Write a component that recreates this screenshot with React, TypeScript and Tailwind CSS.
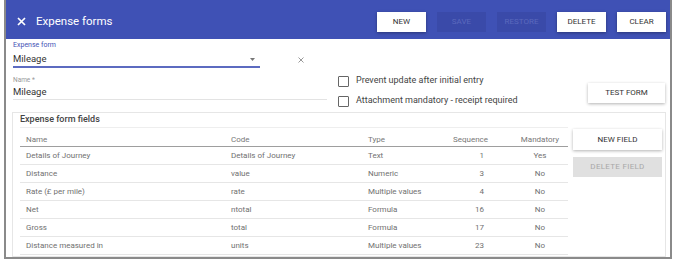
import React from "react";

const rows = [
    { name: "Details of Journey", code: "Details of Journey", type: "Text", seq: 1, mandatory: "Yes" },
    { name: "Distance", code: "value", type: "Numeric", seq: 3, mandatory: "No" },
    { name: "Rate (£ per mile)", code: "rate", type: "Multiple values", seq: 4, mandatory: "No" },
    { name: "Net", code: "ntotal", type: "Formula", seq: 16, mandatory: "No" },
    { name: "Gross", code: "total", type: "Formula", seq: 17, mandatory: "No" },
    { name: "Distance measured in", code: "units", type: "Multiple values", seq: 23, mandatory: "No" },
];

function HeaderButton({ label, disabled }: { label: string; disabled?: boolean }) {
    return (
        <button
            className={
                disabled
                    ? "w-[49px] h-[20px] bg-[#3a4aa9] text-[#5a69bd] text-[8px] uppercase"
                    : "w-[49px] h-[20px] bg-white text-[#333] text-[8px] uppercase shadow-[0_1px_3px_rgba(0,0,0,0.35)]"
            }
        >
            {label}
        </button>
    );
}

function Checkbox({ label }: { label: string }) {
    return (
        <div className="h-[20px] flex items-center">
            <div className="w-[11px] h-[11px] border-[1.5px] border-[#666] rounded-[1px]" />
            <span className="ml-[7px] text-[9px] text-[#444]">{label}</span>
        </div>
    );
}

export default function App() {
    return (
        <div className="w-[674px] h-[260px] bg-white overflow-hidden font-['Roboto',sans-serif]">
            <div className="ml-[4px] w-[668px] h-[259px] border-x-2 border-b-2 border-[#8a8a8a] flex flex-col overflow-hidden">
                {/* header */}
                <div className="h-[39px] flex-none bg-[#3f51b5] flex items-start pl-[11px] pr-[4px]">
                    <svg width="9" height="9" viewBox="0 0 9 9" className="flex-none mt-[17px]">
                        <path d="M1 1L8 8M8 1L1 8" stroke="white" strokeWidth="1.7" />
                    </svg>
                    <span className="ml-[10px] mt-[14px] text-white text-[11.5px] leading-[14px]">Expense forms</span>
                    <div className="ml-auto flex gap-[11px] mt-[12px]">
                        <HeaderButton label="New" />
                        <HeaderButton label="Save" disabled />
                        <HeaderButton label="Restore" disabled />
                        <HeaderButton label="Delete" />
                        <HeaderButton label="Clear" />
                    </div>
                </div>

                {/* form area */}
                <div className="h-[73px] flex flex-none items-start">
                    <div className="ml-[7px] w-[314px]">
                        <div className="flex items-end">
                            <div className="w-[247px] pt-[1px]">
                                <div className="h-[10px] leading-[10px] text-[7px] text-[#3f51b5]">Expense form</div>
                                <div className="h-[18px] pt-[2px] flex items-center justify-between border-b-2 border-[#5c6bc0]">
                                    <span className="text-[9.5px] text-[#333]">Mileage</span>
                                    <svg width="5" height="3" viewBox="0 0 5 3" className="mr-[5px]">
                                        <path d="M0 0H5L2.5 3Z" fill="#777" />
                                    </svg>
                                </div>
                            </div>
                            <svg width="6" height="6" viewBox="0 0 6 6" className="ml-[38px] mb-[5px]">
                                <path d="M0.5 0.5L5.5 5.5M5.5 0.5L0.5 5.5" stroke="#999" strokeWidth="1" />
                            </svg>
                        </div>
                        <div className="mt-[7px]">
                            <div className="h-[10px] leading-[10px] text-[6.5px] text-[#999]">Name *</div>
                            <div className="h-[15px] flex items-center border-b border-[#e3e3e3]">
                                <span className="text-[9.5px] text-[#333]">Mileage</span>
                            </div>
                        </div>
                    </div>
                    <div className="ml-[11px] mt-[32px]">
                        <Checkbox label="Prevent update after initial entry" />
                        <Checkbox label="Attachment mandatory - receipt required" />
                    </div>
                    <button className="ml-auto mr-[5px] mt-[44px] w-[77px] h-[20px] bg-white text-[#333] text-[8px] shadow-[0_1px_3px_rgba(0,0,0,0.3)]">
                        TEST FORM
                    </button>
                </div>

                {/* fields panel */}
                <div className="ml-[6px] mr-[4px] flex-1 border border-[#e6e6e6] flex">
                    <div className="ml-[7px] w-[548px]">
                        <div className="h-[15px] flex items-center border-b border-[#eeeeee] text-[9px] font-medium text-[#444]">
                            Expense form fields
                        </div>
                        <div className="flex h-[19px] pt-[5px] leading-[13px] text-[8px] text-[#777] border-b border-[#9e9e9e]">
                            <div className="w-[205px] pl-[6px]">Name</div>
                            <div className="w-[137px] pl-[6px]">Code</div>
                            <div className="w-[78px] pl-[6px]">Type</div>
                            <div className="w-[72px] pr-[24px] text-right">Sequence</div>
                            <div className="w-[56px] text-center">Mandatory</div>
                        </div>
                        {rows.map((r) => (
                            <div key={r.name} className="flex h-[18px] items-center text-[8px] text-[#707070] border-b border-[#e6e6e6]">
                                <div className="w-[205px] pl-[6px]">{r.name}</div>
                                <div className="w-[137px] pl-[6px]">{r.code}</div>
                                <div className="w-[78px] pl-[6px]">{r.type}</div>
                                <div className="w-[72px] pr-[28px] text-right">{r.seq}</div>
                                <div className="w-[56px] text-center">{r.mandatory}</div>
                            </div>
                        ))}
                    </div>
                    <div className="ml-[5px] mt-[16px] flex flex-col gap-[7px]">
                        <button className="w-[89px] h-[21px] bg-white text-[#333] text-[8px] shadow-[0_1px_3px_rgba(0,0,0,0.3)]">
                            NEW FIELD
                        </button>
                        <button className="w-[89px] h-[20px] bg-[#e0e0e0] text-[#a8a8a8] text-[8px] tracking-[0.3px]">
                            DELETE FIELD
                        </button>
                    </div>
                </div>
            </div>
        </div>
    );
}
